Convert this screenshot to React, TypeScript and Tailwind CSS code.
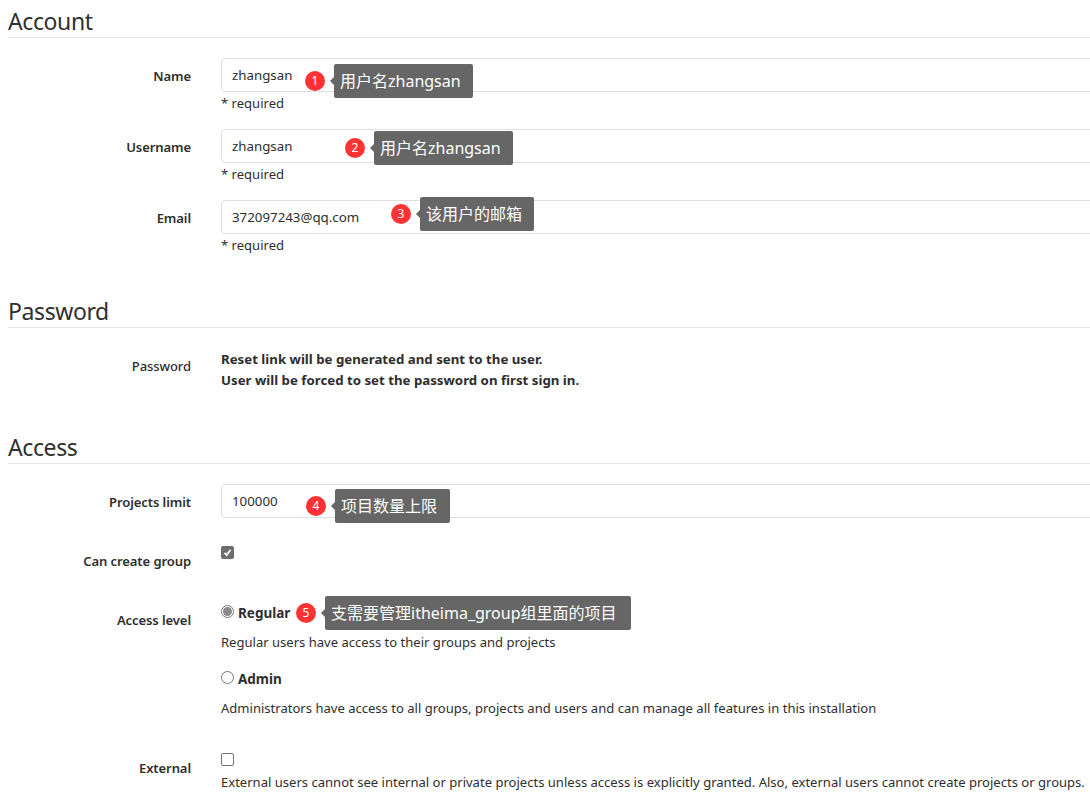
import React from "react";

function Note({ n, text, dotLeft, boxLeft, top, boxW }: { n: number; text: string; dotLeft: number; boxLeft: number; top: number; boxW: number }) {
  return (
    <>
      <span className="absolute flex h-[20px] w-[20px] items-center justify-center rounded-full bg-[#ff3333] text-[12px] text-white" style={{ left: dotLeft, top: top + 7 }}>{n}</span>
      <span className="absolute flex h-[34px] items-center rounded-[2px] bg-[#666666] pl-[6px] text-[16px] whitespace-nowrap text-white" style={{ left: boxLeft, top, width: boxW }}>
        <span className="absolute left-[-4px] top-[13px] h-0 w-0 border-y-[4px] border-r-[4px] border-y-transparent border-r-[#666666]" />
        {text}
      </span>
    </>
  );
}

function Heading({ children, h }: { children: React.ReactNode; h: string }) {
  return <h3 className={`${h} flex items-end border-b border-[#e5e5e5] pb-[2px] text-[23px] leading-[28px] tracking-[-0.4px] text-[#303030]`}>{children}</h3>;
}

function Label({ children, mt }: { children: React.ReactNode; mt: string }) {
  return <div className={`${mt} w-[183px] shrink-0 text-right font-semibold tracking-[-0.1px] text-[#2e2e2e]`}>{children}</div>;
}

function Input({ value }: { value: string }) {
  return <div className="flex h-[34px] w-[900px] shrink-0 items-center rounded-[4px] border border-[#dfdfdf] bg-white pl-[10px] text-[13.3px] text-[#2e2e2e]">{value}</div>;
}

function Row({ children, className }: { children: React.ReactNode; className: string }) {
  return <div className={`flex ${className}`}>{children}</div>;
}

function Required() {
  return <div className="mt-px">* required</div>;
}

export default function App() {
  return (
    <div className="relative h-[797px] w-[1090px] overflow-hidden bg-white pl-2 text-[13.06px] leading-[20px] text-[#2e2e2e]" style={{ fontFamily: '"Noto Sans","Noto Sans CJK SC",sans-serif' }}>
      <Heading h="h-[38px]">Account</Heading>

      <Row className="mt-[20px] gap-[30px]">
        <Label mt="mt-[8px]">Name</Label>
        <div>
          <Input value="zhangsan" />
          <Required />
        </div>
      </Row>
      <Row className="mt-[16px] gap-[30px]">
        <Label mt="mt-[8px]">Username</Label>
        <div>
          <Input value="zhangsan" />
          <Required />
        </div>
      </Row>
      <Row className="mt-[16px] gap-[30px]">
        <Label mt="mt-[8px]">Email</Label>
        <div>
          <Input value="372097243@qq.com" />
          <Required />
        </div>
      </Row>

      <div className="mt-[37px]"><Heading h="h-[36px]">Password</Heading></div>
      <Row className="mt-[21px] gap-[30px]">
        <Label mt="mt-[7px]"><span className="font-medium">Password</span></Label>
        <div className="text-[13.25px] font-bold leading-[21px]">
          <div>Reset link will be generated and sent to the user.</div>
          <div>User will be forced to set the password on first sign in.</div>
        </div>
      </Row>

      <div className="mt-[37px]"><Heading h="h-[36px]">Access</Heading></div>
      <Row className="mt-[20px] gap-[30px]">
        <Label mt="mt-[8px]">Projects limit</Label>
        <Input value="100000" />
      </Row>
      <Row className="mt-[28px] h-[43px] gap-[30px]">
        <Label mt="mt-[5px]">Can create group</Label>
        <span className="flex h-[13px] w-[13px] items-center justify-center rounded-[2px] bg-[#6d6d6d]">
          <svg width="11" height="11" viewBox="0 0 11 11" fill="none"><path d="M2.5 5.8 4.6 8 8.6 2.8" stroke="#fff" strokeWidth="1.8" /></svg>
        </span>
      </Row>
      <Row className="mt-[16px] gap-[30px]">
        <Label mt="mt-[5px]">Access level</Label>
        <div className="-mt-[2px]">
          <div className="flex items-center gap-[4px]">
            <span className="mb-[3px] flex h-[13px] w-[13px] items-center justify-center rounded-full border border-[#767676]">
              <span className="h-[9px] w-[9px] rounded-full bg-[#8a8a8a]" />
            </span>
            <span className="text-[13.5px] font-bold">Regular</span>
          </div>
          <div className="mt-[9px]">Regular users have access to their groups and projects</div>
          <div className="mt-[17px] flex items-center gap-[4px]">
            <span className="mb-[3px] h-[13px] w-[13px] rounded-full border border-[#767676]" />
            <span className="text-[13.5px] font-bold">Admin</span>
          </div>
          <div className="mt-[9px]">Administrators have access to all groups, projects and users and can manage all features in this installation</div>
        </div>
      </Row>
      <Row className="mt-[35px] gap-[30px]">
        <Label mt="mt-[5px]">External</Label>
        <div>
          <span className="block h-[13px] w-[13px] rounded-[2px] border border-[#767676]" />
          <div className="mt-[6px] whitespace-nowrap">External users cannot see internal or private projects unless access is explicitly granted. Also, external users cannot create projects or groups.</div>
        </div>
      </Row>

      <Note n={1} text="用户名zhangsan" dotLeft={305} boxLeft={334} top={64} boxW={139} />
      <Note n={2} text="用户名zhangsan" dotLeft={345} boxLeft={374} top={131} boxW={139} />
      <Note n={3} text="该用户的邮箱" dotLeft={391} boxLeft={420} top={197} boxW={114} />
      <Note n={4} text="项目数量上限" dotLeft={306} boxLeft={335} top={489} boxW={115} />
      <Note n={5} text="支需要管理itheima_group组里面的项目" dotLeft={296} boxLeft={325} top={596} boxW={306} />
    </div>
  );
}
